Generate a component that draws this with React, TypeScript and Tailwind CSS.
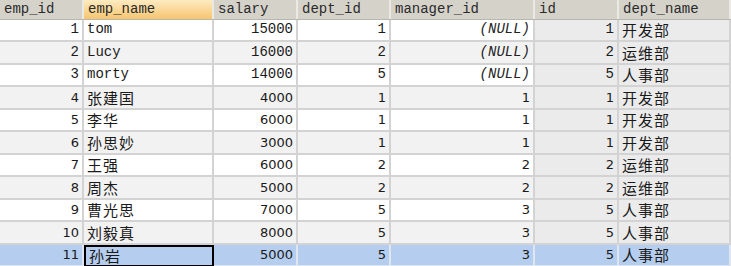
const cols = ["emp_id", "emp_name", "salary", "dept_id", "manager_id", "id", "dept_name"];

type Row = [number, string, number, number, number | null, number, string];

const rows: Row[] = [
  [1, "tom", 15000, 1, null, 1, "开发部"],
  [2, "Lucy", 16000, 2, null, 2, "运维部"],
  [3, "morty", 14000, 5, null, 5, "人事部"],
  [4, "张建国", 4000, 1, 1, 1, "开发部"],
  [5, "李华", 6000, 1, 1, 1, "开发部"],
  [6, "孙思妙", 3000, 1, 1, 1, "开发部"],
  [7, "王强", 6000, 2, 2, 2, "运维部"],
  [8, "周杰", 5000, 2, 2, 2, "运维部"],
  [9, "曹光思", 7000, 5, 3, 5, "人事部"],
  [10, "刘毅真", 8000, 5, 3, 5, "人事部"],
  [11, "孙岩", 5000, 5, 3, 5, "人事部"],
];

const grid = "grid grid-cols-[84px_130px_84px_93px_144px_84px_1fr]";
const hasCjk = (s: string) => /[\u4e00-\u9fff]/.test(s);

const App = () => {
  return (
    <div className="w-[731px] h-[266px] overflow-hidden bg-white text-[#1a1a1a]">
      {/* header */}
      <div className={`${grid} h-[19.5px] bg-[#d5d2ca] border-b border-[#b9b6ae]`}>
        {cols.map((c, i) => (
          <div
            key={c}
            className={`${
              i === 1 ? "bg-gradient-to-b from-[#fdebc0] to-[#f6c56f]" : ""
            } border-r-2 border-[#ebe9e3] pl-[4px] text-[14px] leading-[19px] text-[#2a2a2a] font-['Liberation_Mono',monospace]`}
          >
            {c}
          </div>
        ))}
      </div>

      {rows.map((r, idx) => {
        const selected = idx === rows.length - 1;
        const odd = idx % 2 === 1;
        const mono = idx < 3;
        const rowBg = selected ? "bg-[#b5cdee]" : odd ? "bg-[#f2f2f2]" : "bg-white";
        const font = mono
          ? "font-['Liberation_Mono','Noto_Sans_CJK_SC',monospace] text-[14px]"
          : "font-['DejaVu_Sans','Noto_Sans_CJK_SC',sans-serif] text-[13px]";
        return (
          <div key={r[0]} className={`${grid} h-[22.5px] ${rowBg} ${font}`}>
            {r.map((v, ci) => {
              const isText = ci === 1 || ci === 6;
              const joined = ci >= 5;
              const bg = !selected && joined ? "bg-[#ebebeb]" : "";
              const focus = selected && ci === 1;
              const text = v === null ? "(NULL)" : String(v);
              const cjk = hasCjk(text);
              const line = focus
                ? "border-2 border-black"
                : selected
                ? "border-r-2 border-b-2 border-[#dfe6f0]"
                : "border-r-2 border-b-2 border-[#d3d3d3]";
              return (
                <div
                  key={ci}
                  className={`${bg} ${line} flex items-center overflow-hidden whitespace-nowrap ${
                    isText ? "justify-start pl-[3px]" : "justify-end pr-[3px]"
                  }`}
                >
                  {v === null ? (
                    <span className="italic text-[14px] font-['Liberation_Mono',monospace] text-[#222]">
                      {text}
                    </span>
                  ) : (
                    <span
                      className={
                        cjk
                          ? "text-[15px] tracking-[1px] font-['Noto_Sans_CJK_SC',sans-serif] leading-none"
                          : ""
                      }
                    >
                      {text}
                    </span>
                  )}
                </div>
              );
            })}
          </div>
        );
      })}
    </div>
  );
};

export default App;
